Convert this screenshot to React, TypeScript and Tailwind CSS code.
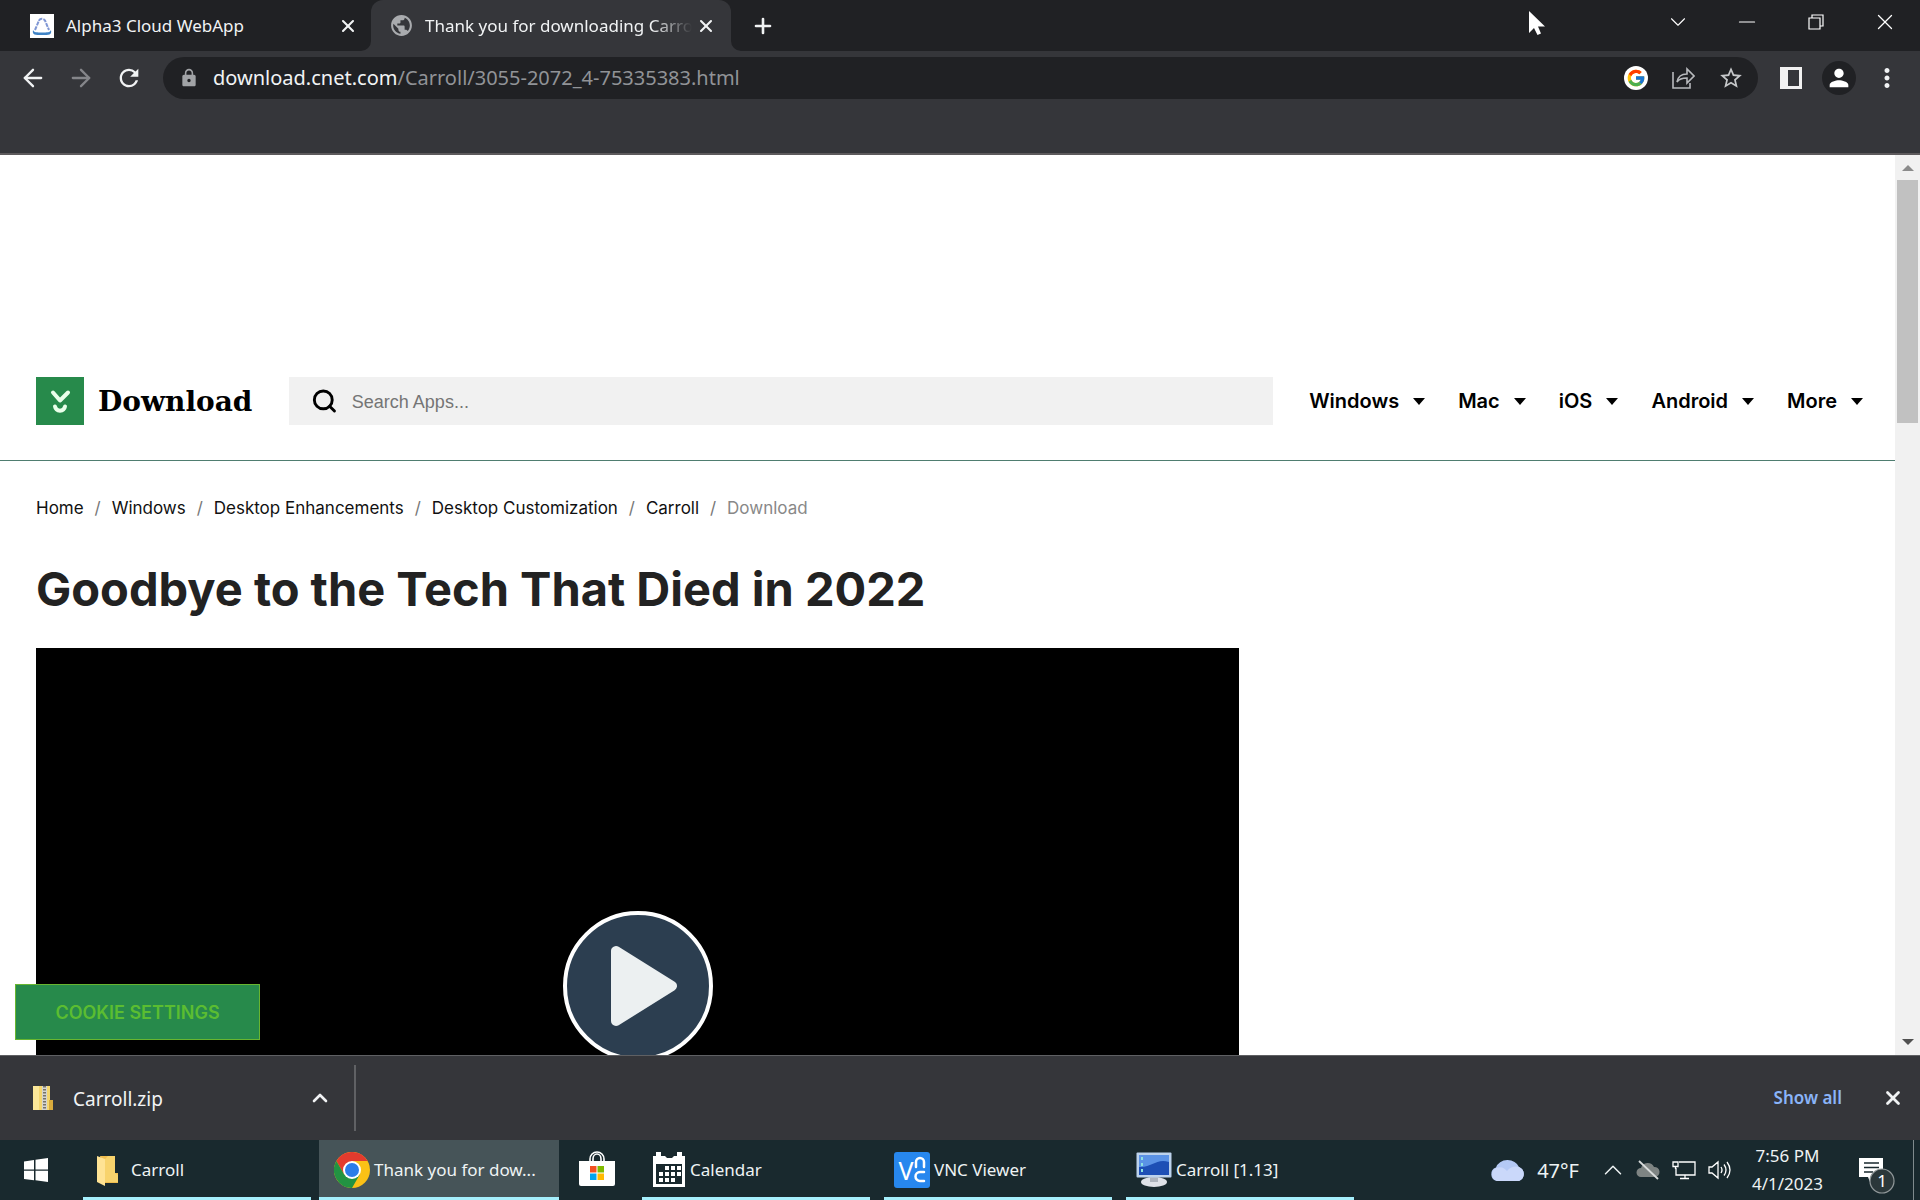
import { useState } from "react";
import type { ReactNode } from "react";
import { ArrowLeft, ArrowRight, Plus, X, ChevronUp, ChevronDown, Minus, Search } from "lucide-react";
import { FcGoogle } from "react-icons/fc";
import { MdLock, MdPerson, MdRefresh, MdMoreVert, MdPublic, MdStarBorder } from "react-icons/md";

const navItems = ["Windows", "Mac", "iOS", "Android", "More"];
const crumbs = ["Home", "Windows", "Desktop Enhancements", "Desktop Customization", "Carroll"];

function TabFlare({ flip = false }: { flip?: boolean }) {
  return (
    <svg viewBox="0 0 10 10" className={flip ? "h-2.5 w-2.5 -scale-x-100" : "h-2.5 w-2.5"}>
      <path d="M10 0v10H0A10 10 0 0 0 10 0z" fill="#35363a" />
    </svg>
  );
}

function TabStrip() {
  return (
    <div className="flex h-[51px] items-end bg-[#202124]">
      <div className="flex h-full w-[361px] items-center pl-[30px]">
        <svg viewBox="0 0 24 24" className="h-6 w-6 shrink-0">
          <rect width="24" height="24" fill="#fff" />
          <path d="M5 16L9 6.500a3.500 3.500 0 0 1 6 0L19 16" fill="none" stroke="#7f96d4" strokeWidth="2" strokeDasharray="4 1" />
          <path d="M3 16c-1 5 2 5 9 5s10 0 9-5c-1 2.500-4 2.500-9 2.500s-8 0-9-2.500z" fill="#3f83c5" />
        </svg>
        <span className="ml-3 flex-1 whitespace-nowrap text-[17px]">Alpha3 Cloud WebApp</span>
        <button aria-label="Close tab" className="mr-[3px]">
          <X className="h-5 w-5" strokeWidth={2.5} />
        </button>
      </div>
      <TabFlare />
      <div className="flex h-full w-[360px] items-center rounded-t-[12px] bg-[#35363a] pl-[18px] pr-[15px]">
        <MdPublic className="h-[25px] w-[25px] shrink-0 text-[#a9abae]" />
        <span className="ml-[11px] flex-1 overflow-hidden whitespace-nowrap text-[17px] [mask-image:linear-gradient(to_right,black_85%,transparent)]">
          Thank you for downloading Carroll
        </span>
        <button aria-label="Close tab" className="ml-1">
          <X className="h-5 w-5" strokeWidth={2.5} />
        </button>
      </div>
      <TabFlare flip />
      <button aria-label="New tab" className="ml-2.5 self-center">
        <Plus className="h-6 w-6" strokeWidth={2.6} />
      </button>
      <div className="mb-2 ml-auto flex items-center gap-[43px] self-center pr-[22px] text-white">
        <button aria-label="Search tabs">
          <ChevronDown className="h-[26px] w-[26px]" strokeWidth={1} />
        </button>
        <button aria-label="Minimize">
          <Minus className="h-[26px] w-[26px]" strokeWidth={1} />
        </button>
        <button aria-label="Restore">
          <svg viewBox="0 0 26 26" className="h-[26px] w-[26px]" fill="none" stroke="currentColor" strokeWidth="1.200">
            <path d="M6 9h11v11H6zM9 9V6h11v11h-3" />
          </svg>
        </button>
        <button aria-label="Close window">
          <X className="h-[26px] w-[26px]" strokeWidth={1.2} />
        </button>
      </div>
    </div>
  );
}

function Toolbar() {
  return (
    <div className="h-[104px] border-b-2 border-[#5d5a5c] bg-[#35363a]">
      <div className="flex items-center pt-1.5 pr-[18px]">
        <div className="flex w-[163px] items-center gap-5 pl-[19px]">
          <button aria-label="Back"><ArrowLeft className="h-7 w-7" /></button>
          <button aria-label="Forward"><ArrowRight className="h-7 w-7 text-[#85868a]" /></button>
          <button aria-label="Reload"><MdRefresh className="h-7 w-7" /></button>
        </div>
        <div className="flex h-[42px] flex-1 items-center rounded-full bg-[#202124] pl-4 pr-3.5">
          <MdLock className="h-5 w-5 text-[#a1a3a6]" />
          <span className="ml-3.5 flex-1 whitespace-nowrap text-[20px]">
            download.cnet.com<span className="text-[#919397]">/Carroll/3055-2072_4-75335383.html</span>
          </span>
          <div className="flex items-center gap-[23px]">
            <button aria-label="Google" className="flex h-6 w-6 items-center justify-center rounded-full bg-white">
              <FcGoogle className="h-5 w-5" />
            </button>
            <button aria-label="Share">
              <svg viewBox="0 0 24 24" className="h-6 w-6" fill="none" stroke="#b8babd" strokeWidth="1.600">
                <path d="M2 6v16h17v-5M6 16c1-6 4-8 10-8V3l7 7-7 7v-5c-4 0-8 1-10 4z" />
              </svg>
            </button>
            <button aria-label="Bookmark"><MdStarBorder className="h-[26px] w-[26px] text-[#c6c8ca]" /></button>
          </div>
        </div>
        <button aria-label="Side panel" className="ml-[22px]">
          <svg viewBox="0 0 22 22" className="h-[22px] w-[22px]">
            <rect width="22" height="22" fill="#f1f1f1" />
            <rect x="8" y="3" width="11" height="16" fill="#35363a" />
          </svg>
        </button>
        <button aria-label="Profile" className="ml-5 flex h-[34px] w-[34px] items-center justify-center rounded-full bg-[#202124] text-white">
          <MdPerson className="h-7 w-7" />
        </button>
        <button aria-label="Menu" className="ml-4"><MdMoreVert className="h-[30px] w-[30px]" /></button>
      </div>
    </div>
  );
}

function SiteHeader() {
  const [query, setQuery] = useState("");
  return (
    <header className="flex items-center border-b border-[#4f7d70] pt-[222px] pr-8 pb-[35px] pl-9">
      <a href="#" className="flex items-center">
        <svg viewBox="0 0 48 48" className="h-12 w-12">
          <rect width="48" height="48" fill="#278a4b" />
          <g fill="none" stroke="#eaffea" strokeWidth="4" strokeLinecap="round" strokeLinejoin="round">
            <path d="M17 15.500l7 8 8-8" />
            <path d="M19 29.500c1 5.500 9 5.500 10 0" />
          </g>
        </svg>
        <span className="ml-3.5 w-[154px] whitespace-nowrap pt-0.5 font-['DejaVu_Serif',serif] text-[28px] leading-8 font-bold text-black">Download</span>
      </a>
      <label className="ml-[37px] flex h-12 flex-1 items-center bg-[#f1f1f1] pl-[22px]">
        <Search className="h-7 w-7 text-black" strokeWidth={2.6} />
        <input
          aria-label="Search Apps"
          placeholder="Search Apps..."
          value={query}
          onChange={(e) => setQuery(e.target.value)}
          className="ml-3.5 w-full bg-transparent pt-0.5 font-['Liberation_Sans',sans-serif] text-[18px] text-black outline-none placeholder:text-[#757575]"
        />
      </label>
      <nav className="ml-9 flex items-center gap-[33px]">
        {navItems.map((item) => (
          <button key={item} className="flex items-center gap-3.5 text-[20px] font-semibold text-black">
            {item}
            <svg viewBox="0 0 12 7" className="h-[7px] w-3"><path d="M0 0h12L6 7z" /></svg>
          </button>
        ))}
      </nav>
    </header>
  );
}

function Page() {
  return (
    <div className="relative flex min-h-0 flex-1 bg-white">
      <div className="flex min-w-0 flex-1 flex-col overflow-hidden font-['Inter',sans-serif]">
        <SiteHeader />
        <main className="flex min-h-0 flex-1 flex-col px-9 pt-[35px]">
          <nav className="flex items-center text-[17px] leading-6 whitespace-nowrap text-[#111]">
            {crumbs.map((crumb) => (
              <span key={crumb} className="flex">
                <a href="#">{crumb}</a>
                <span className="w-7 text-center text-[#777]">/</span>
              </span>
            ))}
            <span className="text-[#888]">Download</span>
          </nav>
          <h1 className="mt-[39px] mb-[29px] text-[47px] leading-[60px] font-bold text-[#222]">
            Goodbye to the Tech That Died in 2022
          </h1>
          <section className="flex w-[66%] flex-1 justify-center bg-black pt-[263px]">
            <button aria-label="Play" className="h-[150px] w-[150px] shrink-0 rounded-full border-4 border-white bg-[#2c3e50]">
              <svg viewBox="0 0 142 142" className="w-full">
                <path d="M49 36v70L105 71z" fill="#ecf0f1" stroke="#ecf0f1" strokeWidth="10" strokeLinejoin="round" />
              </svg>
            </button>
          </section>
        </main>
      </div>
      <div className="flex w-[25px] flex-col items-center bg-[#f1f1f1]">
        <svg viewBox="0 0 12 6" className="mt-2.5 mb-[9px] h-1.5 w-3"><path d="M0 6h12L6 0z" fill="#8b8b8b" /></svg>
        <div className="h-[27%] w-[21px] bg-[#c1c1c1]" />
        <svg viewBox="0 0 12 6" className="mt-auto mb-2.5 h-1.5 w-3"><path d="M0 0h12L6 6z" fill="#505050" /></svg>
      </div>
      <button className="absolute bottom-[15px] left-[15px] h-14 w-[245px] border border-[#68b631] bg-[#278a4b] font-['Inter',sans-serif] text-[18px] font-semibold text-[#5bbd31]">
        COOKIE SETTINGS
      </button>
    </div>
  );
}

function DownloadBar() {
  return (
    <div className="flex h-[85px] items-center border-t border-[#5f6063] bg-[#35363a]">
      <div className="flex h-[66px] w-[356px] items-center border-r-2 border-[#606164] pl-8">
        <svg viewBox="0 0 22 26" className="h-[26px] w-[22px]">
          <path d="M1 1h17v14h3v10H1z" fill="#f4d66f" />
          <path d="M1 1h6v24H1z" fill="#fbe798" />
          <path d="M17 15h4v10h-4z" fill="#d9ab3d" />
          <path d="M10 1h5v24h-5z" fill="#d5d5d0" />
          <path d="M12.500 1v24" stroke="#77736a" strokeWidth="3" strokeDasharray="1.500 1.500" />
        </svg>
        <span className="ml-[19px] flex-1 pt-0.5 text-[19px]">Carroll.zip</span>
        <button aria-label="Download options" className="mr-[22px]">
          <ChevronUp className="h-6 w-6" strokeWidth={2.6} />
        </button>
      </div>
      <button className="ml-auto text-[17px] font-semibold text-[#8ab4f8]">Show all</button>
      <button aria-label="Close downloads bar" className="mr-4 ml-10">
        <X className="h-[22px] w-[22px]" strokeWidth={3} />
      </button>
    </div>
  );
}

function Task({ icon, label, active = false }: { icon: ReactNode; label: string; active?: boolean }) {
  return (
    <button
      className={
        active
          ? "-ml-1.5 flex h-full w-[240px] items-center border-b-[3px] border-[#a5effc] bg-[#465458] pl-[15px] pt-[3px]"
          : "flex h-full w-[228px] items-center border-b-[3px] border-[#a5effc] pl-2.5 pt-[3px]"
      }
    >
      {icon}
      <span className="ml-1 whitespace-nowrap text-[17px]">{label}</span>
    </button>
  );
}

function Taskbar() {
  return (
    <div className="flex h-[60px] items-center bg-[#19292e] text-[#eef3f4]">
      <button aria-label="Start" className="w-[83px] pl-6">
        <svg viewBox="0 0 24 24" className="h-6 w-6" fill="#fff">
          <path d="M0 3.500L10 2v9.500H0zM11.500 1.800L24 0v11.500H11.500zM0 12.800h10v9.500L0 21zM11.500 12.800H24V24l-12.500-1.800z" />
        </svg>
      </button>
      <div className="flex h-full items-center gap-3.5">
        <Task
          label="Carroll"
          icon={
            <svg viewBox="0 0 34 32" className="h-8 w-[34px]">
              <path d="M7 2h15v17h3v10H12z" fill="#efbd4f" />
              <path d="M4 2l8 3v27l-8-4z" fill="#ffe394" />
              <path d="M12 5l3-3h7v17l3 2v7H12z" fill="#f8d36c" />
            </svg>
          }
        />
        <Task
          label="Thank you for dow..."
          active
          icon={
            <svg viewBox="0 0 36 36" className="h-9 w-9">
              <circle cx="18" cy="18" r="18" fill="#fbc116" />
              <path d="M18 9h15.600A18 18 0 0 0 2.400 9L10.200 22.500z" fill="#e33b2e" />
              <path d="M2.400 9A18 18 0 0 0 18 36l7.800-13.500L10.200 22.500z" fill="#229342" />
              <circle cx="18" cy="18" r="9" fill="#fff" />
              <circle cx="18" cy="18" r="7" fill="#2b7de9" />
            </svg>
          }
        />
        <button aria-label="Microsoft Store" className="mr-[13px] mb-[3px] ml-1.5">
          <svg viewBox="0 0 36 36" className="h-9 w-9">
            <path d="M11 12V8a7 7 0 0 1 14 0v4M14 12V8a4 5 0 0 1 8 0v4" fill="none" stroke="#fff" strokeWidth="1.600" />
            <path d="M0 10h36v23a2 2 0 0 1-2 2H2a2 2 0 0 1-2-2z" fill="#fff" />
            <path d="M11 15h6.500v6.500H11z" fill="#f25022" />
            <path d="M18.500 15H25v6.500h-6.500z" fill="#7fba00" />
            <path d="M11 22.500h6.500V29H11z" fill="#00a4ef" />
            <path d="M18.500 22.500H25V29h-6.500z" fill="#ffb900" />
          </svg>
        </button>
        <Task
          label="Calendar"
          icon={
            <svg viewBox="0 0 34 36" className="h-9 w-[34px]" fill="#fff">
              <path d="M1 4h3V0h5v4h4l2 2h5l2-2h3V0h5v4h3v31H1zM4 12v20h26V12z" fillRule="evenodd" />
              <path d="M13 14h4v4h-4zM19 14h4v4h-4zM25 14h4v4h-4zM7 20h4v4H7zM13 20h4v4h-4zM19 20h4v4h-4zM25 20h4v4h-4zM7 26h4v4H7zM13 26h4v4h-4zM19 26h4v4h-4z" />
            </svg>
          }
        />
        <Task
          label="VNC Viewer"
          icon={
            <span className="flex h-9 w-9 items-center justify-center rounded-[3px] bg-[#2787ee] text-white">
              <span className="text-[25px] leading-9">V</span>
              <svg viewBox="0 0 12 28" className="h-7 w-3" fill="none" stroke="#fff" strokeWidth="2.500" strokeLinecap="round">
                <path d="M2 11V6a4 4 0 0 1 8 0v5M10 16H6a4 4 0 0 0 0 9h4" />
              </svg>
            </span>
          }
        />
        <Task
          label="Carroll [1.13]"
          icon={
            <svg viewBox="0 0 36 36" className="h-9 w-9">
              <ellipse cx="18" cy="30" rx="13" ry="5" fill="#dfe2e8" />
              <path d="M14 24h8v6h-8z" fill="#aeb4bd" />
              <rect x="0.500" y="0.500" width="35" height="25" rx="1" fill="#bcd2ec" />
              <path d="M3 3h30v20H3z" fill="#1d4fb5" />
              <path d="M3 3h30v7C20 6 16 16 3 15z" fill="#5b93e6" />
              <path d="M5 5h2v3H5zM5 11h2v3H5zM5 17h2v3H5z" fill="#8de0e0" />
            </svg>
          }
        />
      </div>
      <div className="ml-auto flex h-full items-center">
        <svg viewBox="0 0 36 24" className="h-6 w-9">
          <path d="M7 23a7 7 0 0 1-1-13.500A12 10 0 0 1 29 9a7.500 7.500 0 0 1 0 14z" fill="#b4c9f5" />
          <path d="M7 23a7 7 0 0 1-1-13c6-2 9 1 11 3 4-5 9-5 12-4a7.500 7.500 0 0 1 0 14z" fill="#cad8fa" />
        </svg>
        <span className="ml-[11px] pt-0.5 text-[20px]">47°F</span>
        <button aria-label="Show hidden icons" className="ml-[19px]">
          <ChevronUp className="h-[30px] w-[30px]" strokeWidth={1.2} />
        </button>
        <svg viewBox="0 0 24 20" className="ml-2 h-5 w-6">
          <path d="M5 17a4.500 4.500 0 0 1 0-9 7 7 0 0 1 13-1 5 5 0 0 1 1 10z" fill="#7e8483" />
          <path d="M3 1l19 18" stroke="#d9dcdc" strokeWidth="1.800" />
        </svg>
        <svg viewBox="0 0 24 20" className="ml-3 h-5 w-6" fill="none" stroke="#fff" strokeWidth="1.300">
          <path d="M7 2h16v13H4V8M13 15v3M8 18.500h9M1 2h5v4.500H1zM3.500 6.500V9" />
        </svg>
        <svg viewBox="0 0 24 20" className="ml-3 h-5 w-6" fill="none" stroke="#fff" strokeWidth="1.300">
          <path d="M1 7v6h3l6 5V2L4 7zM13 7q2 3 0 6M16 4.500q4 5.500 0 11M19 2q6 8 0 16" />
        </svg>
        <div className="ml-5 text-center text-[17px] leading-7">
          <div>7:56 PM</div>
          <div>4/1/2023</div>
        </div>
        <button aria-label="Notifications" className="mr-4 ml-9 pt-3">
          <svg viewBox="0 0 38 38" className="h-[38px] w-[38px]">
            <path d="M0 1h24v19H16l-5 5-2-5H0z" fill="#fff" />
            <path d="M5 6h15M5 10.500h15M5 15h9" stroke="#19292e" strokeWidth="1.300" />
            <circle cx="23" cy="24" r="12" fill="#2b373a" stroke="#91989a" strokeWidth="1.200" />
            <text x="23" y="30" textAnchor="middle" fontSize="17" fill="#fff">1</text>
          </svg>
        </button>
        <div className="mr-1.5 h-full w-px bg-[#7f8a8d]" />
      </div>
    </div>
  );
}

export default function App() {
  return (
    <div className="relative flex h-screen flex-col overflow-hidden bg-[#35363a] font-['Noto_Sans',sans-serif] text-[#f1f3f4]">
      <TabStrip />
      <Toolbar />
      <Page />
      <DownloadBar />
      <Taskbar />
      {/* mouse pointer */}
      <svg viewBox="0 0 18 26" className="pointer-events-none absolute top-2.5 left-[1528px] h-[26px] w-[18px]">
        <path d="M1 1v22l5-5 3.500 7 3.500-1.500-3-7h7z" fill="#fff" />
      </svg>
    </div>
  );
}
